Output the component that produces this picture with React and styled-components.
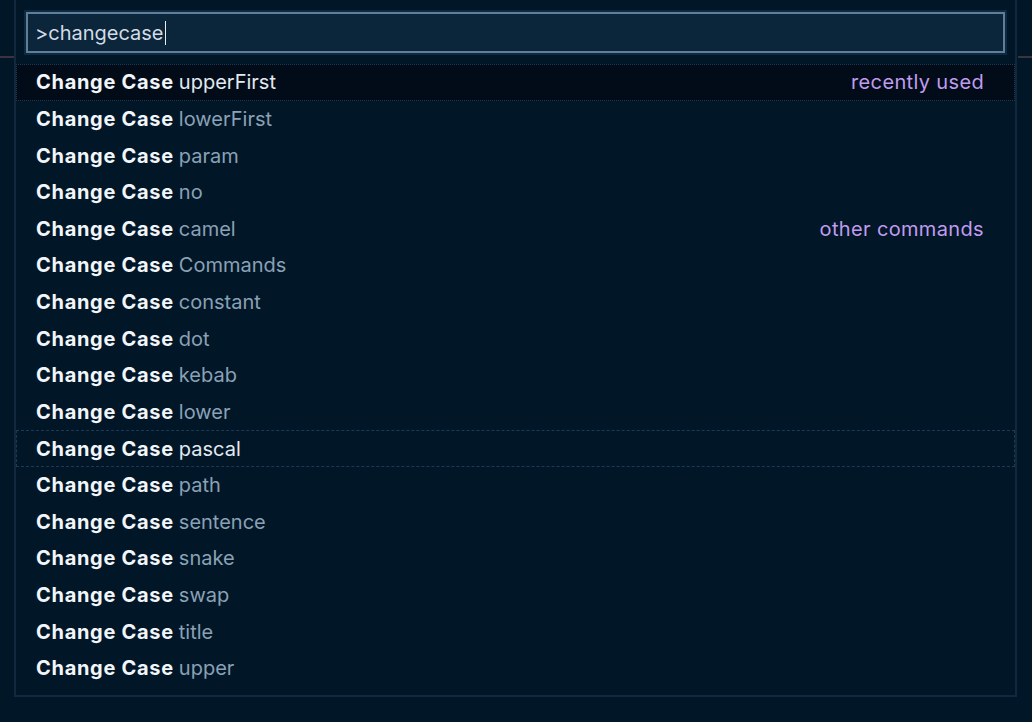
import React from 'react'
import styled, { createGlobalStyle } from 'styled-components'

const GlobalStyle = createGlobalStyle`
  html, body {
    margin: 0;
    padding: 0;
    background: #011627;
    font-family: Inter, "Noto Sans", sans-serif;
  }
`

const Page = styled.div`
  width: 1032px;
  height: 722px;
  overflow: hidden;
  background:
    linear-gradient(#011627, #011627) 14px 0 / 1004px 100% no-repeat,
    linear-gradient(transparent 56px, #3a3342 56px, #3a3342 58px, transparent 58px),
    #011627;
`

const Panel = styled.div`
  margin-left: 14px;
  width: 1003px;
  height: 697px;
  box-sizing: border-box;
  background: #011627;
  border: 2px solid #12283f;
  border-top: none;
  padding: 12px 0 0 0;
`

const InputWrap = styled.div`
  padding: 0 10px 0 10px;
`

const Input = styled.div`
  height: 41px;
  box-sizing: border-box;
  background: #0b253a;
  border: 2px solid #5f7e97;
  outline: 2px solid #0e2a42;
  display: flex;
  align-items: center;
  padding-left: 7px;
  font-size: 20px;
  color: #d2dce6;
`

const Caret = styled.span`
  display: inline-block;
  width: 1px;
  height: 24px;
  background: #e6edf3;
  margin-left: 1px;
`

const List = styled.div`
  margin-top: 11px;
`

const Row = styled.div`
  height: 36.625px;
  box-sizing: border-box;
  display: flex;
  align-items: center;
  padding: 0 30px 0 19px;
  font-size: 20px;
  background: ${(p) => (p.active ? '#020c18' : 'transparent')};
  border: 1px ${(p) => (p.active ? 'dotted #1d3a55' : p.focused ? 'dashed #1d3a55' : 'solid transparent')};
`

const Label = styled.span`
  font-weight: 700;
  letter-spacing: 0.7px;
  color: #f2f6fa;
`

const Detail = styled.span`
  margin-left: 5px;
  color: ${(p) => (p.bright ? '#e3eaf1' : '#8aa1b6')};
`

const Tag = styled.span`
  margin-left: auto;
  letter-spacing: 0.35px;
  color: #c09cee;
`

const items = [
  ['upperFirst', 'recently used'],
  ['lowerFirst'],
  ['param'],
  ['no'],
  ['camel', 'other commands'],
  ['Commands'],
  ['constant'],
  ['dot'],
  ['kebab'],
  ['lower'],
  ['pascal'],
  ['path'],
  ['sentence'],
  ['snake'],
  ['swap'],
  ['title'],
  ['upper'],
]

export default function App() {
  return (
    <Page>
      <GlobalStyle />
      <Panel>
        <InputWrap>
          <Input>
            &gt;changecase
            <Caret />
          </Input>
        </InputWrap>
        <List>
          {items.map(([name, tag], i) => (
            <Row key={name} active={i === 0} focused={name === 'pascal'}>
              <Label>Change Case</Label>
              <Detail bright={i === 0 || name === 'pascal'}>{name}</Detail>
              {tag && <Tag>{tag}</Tag>}
            </Row>
          ))}
        </List>
      </Panel>
    </Page>
  )
}
